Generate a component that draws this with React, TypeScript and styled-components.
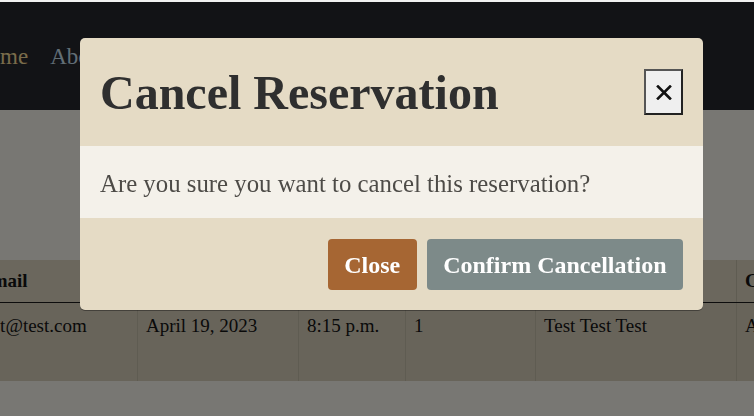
import React from "react"
import styled, { createGlobalStyle } from "styled-components"

const GlobalStyle = createGlobalStyle`
  html, body {
    margin: 0;
    padding: 0;
    overflow: hidden;
    background: #f1f1f1;
  }
  body {
    font-family: "Liberation Serif", "DejaVu Serif", serif;
  }
`

const Page = styled.div`
  position: relative;
  height: 416px;
  border-top: 2px solid #f1f1f1;
  background: #f0eee6;
  overflow: hidden;
`

const Navbar = styled.nav`
  height: 108px;
  background: #24262c;
  display: flex;
  align-items: center;
`

const NavList = styled.ul`
  display: flex;
  gap: 22px;
  list-style: none;
  margin: 0 0 0 -28px;
  padding: 2px 0 0;
`

const NavLink = styled.li<{ color: string }>`
  font-size: 23px;
  color: ${({ color }) => color};
  white-space: nowrap;
`

const Content = styled.main`
  padding-top: 150px;
`

const Table = styled.table<{ w: number }>`
  width: ${({ w }) => w}px;
  border-collapse: collapse;
  margin-left: -30px;
  table-layout: fixed;
  background: #d0c8b4;
  font-size: 19px;
  color: #141414;
`

const HeadCell = styled.th<{ w: number }>`
  box-sizing: border-box;
  width: ${({ w }) => w}px;
  height: 42px;
  padding: 0 6px 0 8px;
  text-align: left;
  font-weight: 700;
  background: #d6ceba;
  border-left: 1px solid rgba(0, 0, 0, 0.08);
  border-bottom: 1px solid #1a1a1a;
  white-space: nowrap;
  overflow: hidden;
`

const Cell = styled.td`
  box-sizing: border-box;
  height: 79px;
  padding: 12px 6px 0 8px;
  vertical-align: top;
  border-left: 1px solid rgba(0, 0, 0, 0.08);
  white-space: nowrap;
  overflow: hidden;
`

const Overlay = styled.div`
  position: fixed;
  top: 2px;
  left: 0;
  right: 0;
  bottom: 0;
  background: rgba(0, 0, 0, 0.5);
`

const Modal = styled.div`
  width: 623px;
  margin: 36px 0 0 80px;
  border-radius: 5px;
  overflow: hidden;
  background: #e5dbc5;
  box-shadow: 0 1px 0 rgba(0, 0, 0, 0.35);
`

const Header = styled.header`
  display: flex;
  align-items: center;
  justify-content: space-between;
  height: 108px;
  box-sizing: border-box;
  padding: 0 20px;
`

const Title = styled.h1`
  margin: 2px 0 0;
  font-size: 48px;
  line-height: 1.2;
  font-weight: 700;
  color: #2f2f2f;
`

const CloseX = styled.button`
  width: 39px;
  height: 46px;
  padding: 0;
  display: flex;
  align-items: center;
  justify-content: center;
  background: #efefef;
  border: 2px solid;
  border-color: #555 #222 #222 #555;
  cursor: pointer;
`

const Body = styled.div`
  background: #f4f1ea;
  padding: 19px 20px 16px;
  font-size: 24.8px;
  line-height: 1.5;
  color: #4d4b47;
`

const Footer = styled.footer`
  display: flex;
  justify-content: flex-end;
  gap: 10px;
  padding: 21px 20px 20px;
`

const ActionButton = styled.button<{ bg: string }>`
  height: 51px;
  padding: 0 16.5px;
  border: 0;
  border-radius: 4px;
  background: ${({ bg }) => bg};
  color: #fff;
  font-family: "Liberation Serif", "DejaVu Serif", serif;
  font-size: 24px;
  font-weight: 700;
  line-height: 1.5;
  cursor: pointer;
`

const columns = [
  { title: "Email", w: 167, value: "test@test.com" },
  { title: "Date", w: 161, value: "April 19, 2023" },
  { title: "Time", w: 107, value: "8:15 p.m." },
  { title: "Guests", w: 130, value: "1" },
  { title: "Name", w: 201, value: "Test Test Test" },
  { title: "Comments", w: 150, value: "Allergies" },
]

const tableWidth = columns.reduce((sum, c) => sum + c.w, 0)

const App = () => {
  return (
    <>
      <GlobalStyle />
      <Page>
        <Navbar>
          <NavList>
            <NavLink color="#f2d896">Home</NavLink>
            <NavLink color="#c4dcea">About</NavLink>
            <NavLink color="#c4dcea">Menu</NavLink>
            <NavLink color="#c4dcea">Reservations</NavLink>
          </NavList>
        </Navbar>
        <Content>
          <Table w={tableWidth}>
            <thead>
              <tr>
                {columns.map((c) => (
                  <HeadCell key={c.title} w={c.w}>
                    {c.title}
                  </HeadCell>
                ))}
              </tr>
            </thead>
            <tbody>
              <tr>
                {columns.map((c) => (
                  <Cell key={c.title}>{c.value}</Cell>
                ))}
              </tr>
            </tbody>
          </Table>
        </Content>
        <Overlay>
          <Modal>
            <Header>
              <Title>Cancel Reservation</Title>
              <CloseX aria-label="Close">
                <svg width="16" height="15" viewBox="0 0 16 15">
                  <path d="M2 1.5 L14 13.5 M14 1.5 L2 13.5" stroke="#111" strokeWidth="2.6" strokeLinecap="square" />
                </svg>
              </CloseX>
            </Header>
            <Body>Are you sure you want to cancel this reservation?</Body>
            <Footer>
              <ActionButton bg="#a66633">Close</ActionButton>
              <ActionButton bg="#7d8a89">Confirm Cancellation</ActionButton>
            </Footer>
          </Modal>
        </Overlay>
      </Page>
    </>
  )
}

export default App
